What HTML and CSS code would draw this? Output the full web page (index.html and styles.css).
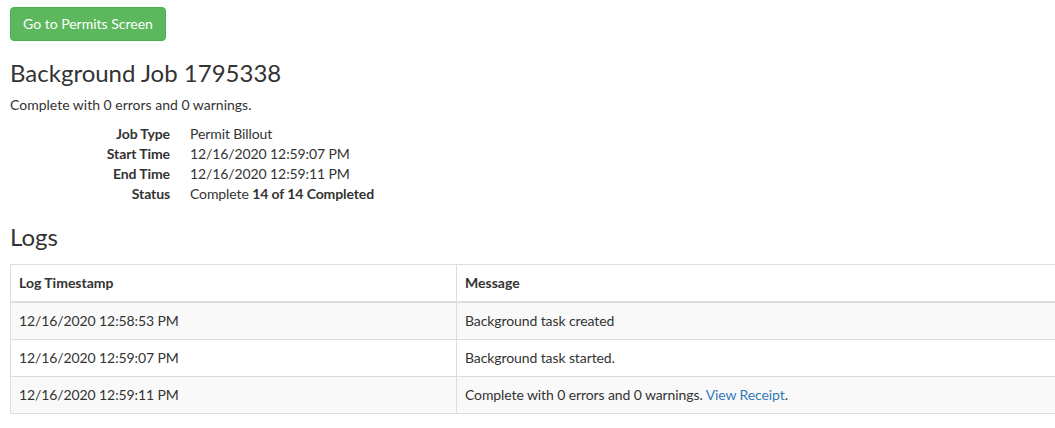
FILE: index.html
```html
<!DOCTYPE html>
<html>
<head>
<meta charset="utf-8">
<link rel="stylesheet" href="styles.css">
</head>
<body>
<div class="page">
  <a class="btn-success" href="#">Go to Permits Screen</a>
  <h3 class="title">Background Job 1795338</h3>
  <p class="summary">Complete with 0 errors and 0 warnings.</p>
  <dl class="details">
    <dt>Job Type</dt><dd>Permit Billout</dd>
    <dt>Start Time</dt><dd>12/16/2020 12:59:07 PM</dd>
    <dt>End Time</dt><dd>12/16/2020 12:59:11 PM</dd>
    <dt>Status</dt><dd>Complete <strong>14 of 14 Completed</strong></dd>
  </dl>
  <h3 class="title logs-title">Logs</h3>
  <table class="logs">
    <thead>
      <tr><th class="col-time">Log Timestamp</th><th>Message</th></tr>
    </thead>
    <tbody>
      <tr><td>12/16/2020 12:58:53 PM</td><td>Background task created</td></tr>
      <tr><td>12/16/2020 12:59:07 PM</td><td>Background task started.</td></tr>
      <tr><td>12/16/2020 12:59:11 PM</td><td>Complete with 0 errors and 0 warnings. <a href="#">View Receipt</a>.</td></tr>
    </tbody>
  </table>
</div>
</body>
</html>
```
FILE: styles.css
```css
html, body {
  margin: 0;
  padding: 0;
  background: #fff;
}
body {
  font-family: Lato, "Open Sans", sans-serif;
  font-size: 14px;
  line-height: 1.42857;
  color: #333;
  overflow: hidden;
}
.page {
  padding: 7px 0 0 10px;
  overflow: hidden;
}
.btn-success {
  display: inline-block;
  box-sizing: border-box;
  height: 34px;
  padding: 6px 12px;
  background: #5cb85c;
  border: 1px solid #4cae4c;
  border-radius: 4px;
  color: #fff;
  text-decoration: none;
  font-size: 14px;
  line-height: 20px;
}
.title {
  font-size: 24px;
  font-weight: 400;
  line-height: 1.1;
  margin: 19px 0 9px;
  color: #333;
}
.logs-title {
  margin-bottom: 13px;
}
.summary {
  margin: 0 0 9px;
}
.details {
  display: grid;
  grid-template-columns: 160px 1fr;
  column-gap: 20px;
  margin: 0 0 20px;
  letter-spacing: -0.1px;
}
.details dt {
  font-weight: 700;
  text-align: right;
}
.details dd {
  margin: 0;
}
.logs {
  width: calc(100% + 20px);
  border-collapse: collapse;
  border: 1px solid #ddd;
  margin-bottom: 20px;
}
.logs th, .logs td {
  text-align: left;
  padding: 8px;
  border: 1px solid #ddd;
  line-height: 20px;
  vertical-align: top;
}
.logs td {
  letter-spacing: -0.1px;
}
.logs thead th {
  border-bottom: 2px solid #ddd;
  font-weight: 700;
}
.logs .col-time {
  width: 429px;
}
.logs tbody tr:nth-child(odd) {
  background: #f9f9f9;
}
.logs a {
  color: #337ab7;
  text-decoration: none;
}
```
